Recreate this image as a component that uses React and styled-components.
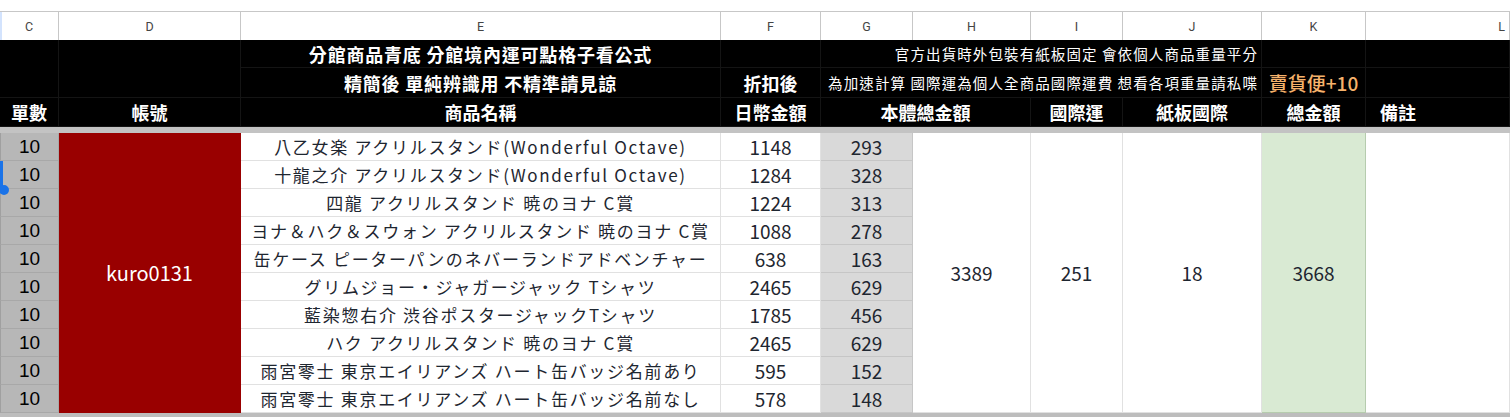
import React from 'react'
import styled, { createGlobalStyle } from 'styled-components'

const COLS = '59px 182px 480px 100px 92px 118px 92px 139px 104px 1fr'

const items = [
  { name: '八乙女楽 アクリルスタンド(Wonderful Octave)', yen: 1148, twd: 293 },
  { name: '十龍之介 アクリルスタンド(Wonderful Octave)', yen: 1284, twd: 328 },
  { name: '四龍 アクリルスタンド 暁のヨナ C賞', yen: 1224, twd: 313 },
  { name: 'ヨナ＆ハク＆スウォン アクリルスタンド 暁のヨナ C賞', yen: 1088, twd: 278 },
  { name: '缶ケース ピーターパンのネバーランドアドベンチャー', yen: 638, twd: 163 },
  { name: 'グリムジョー・ジャガージャック Tシャツ', yen: 2465, twd: 629 },
  { name: '藍染惣右介 渋谷ポスタージャックTシャツ', yen: 1785, twd: 456 },
  { name: 'ハク アクリルスタンド 暁のヨナ C賞', yen: 2465, twd: 629 },
  { name: '雨宮零士 東京エイリアンズ ハート缶バッジ名前あり', yen: 595, twd: 152 },
  { name: '雨宮零士 東京エイリアンズ ハート缶バッジ名前なし', yen: 578, twd: 148 },
]

const GlobalStyle = createGlobalStyle`
  html, body {
    margin: 0;
    padding: 0;
    background: #fff;
    overflow: hidden;
  }
  body {
    font-family: "Noto Sans CJK TC", "Noto Sans", sans-serif;
  }
`

const Sheet = styled.div`
  width: 1510px;
  height: 417px;
  padding-top: 11px;
  box-sizing: border-box;
  background: #fff;
`

const ColumnBar = styled.div`
  display: grid;
  grid-template-columns: ${COLS};
  height: 29px;
  border-top: 1px solid #c7c7c7;
  box-sizing: border-box;
`

const ColLetter = styled.div`
  display: flex;
  align-items: center;
  justify-content: ${p => (p.$end ? 'flex-end' : 'center')};
  padding-right: ${p => (p.$end ? '4px' : '0')};
  border-right: 1px solid #c7c7c7;
  font-family: Roboto, "Liberation Sans", sans-serif;
  font-size: 12.5px;
  color: #444;
  box-shadow: ${p => (p.$mark ? 'inset 2px 0 0 #d3e3fd' : 'none')};
`

const Header = styled.div`
  display: grid;
  grid-template-columns: ${COLS};
  grid-template-rows: 28px 30px 29px;
  background: #000;
`

const HeadCell = styled.div`
  grid-column: ${p => p.$col || 'auto'};
  grid-row: ${p => p.$row || 'auto'};
  display: flex;
  align-items: center;
  justify-content: ${p => p.$align || 'center'};
  padding: ${p => p.$pad || '0'};
  border-right: 1px solid #141414;
  border-bottom: 1px solid #141414;
  color: ${p => p.$color || '#fff'};
  font-size: ${p => p.$size || '18px'};
  font-weight: ${p => p.$weight || 700};
  letter-spacing: ${p => p.$track || '0'};
  white-space: nowrap;
  overflow: hidden;
  box-sizing: border-box;
`

const Freeze = styled.div`
  height: 6px;
  background: #c3c3c3;
`

const Body = styled.div`
  position: relative;
  display: grid;
  grid-template-columns: ${COLS};
  grid-template-rows: repeat(10, 28px);
`

const Cell = styled.div`
  grid-column: ${p => p.$col || 'auto'};
  grid-row: ${p => p.$row || 'auto'};
  display: flex;
  align-items: center;
  justify-content: center;
  background: ${p => p.$bg || '#fff'};
  border-right: 1px solid ${p => p.$line || '#e1e1e1'};
  border-bottom: 1px solid ${p => p.$line || '#e1e1e1'};
  color: #1e2630;
  font-size: 19px;
  white-space: nowrap;
  overflow: hidden;
  box-sizing: border-box;
`

const Qty = styled(Cell)`
  font-family: "Liberation Sans", Arial, sans-serif;
  color: #000;
  border-left: 1px solid #a0a0a0;
`

const ItemName = styled(Cell)`
  font-size: 17px;
  letter-spacing: 1.7px;
`

const Account = styled(Cell)`
  color: #fff;
  font-size: 20px;
  font-weight: 400;
`

const BottomEdge = styled.div`
  height: 4px;
  background: #bdbdbd;
`

const SelectEdge = styled.div`
  position: absolute;
  left: 0;
  top: 28px;
  width: 3px;
  height: 29px;
  background: #1a73e8;
`

const SelectDot = styled.div`
  position: absolute;
  left: -1px;
  top: 52px;
  width: 10px;
  height: 10px;
  border-radius: 50%;
  background: #1a73e8;
`

const letters = ['C', 'D', 'E', 'F', 'G', 'H', 'I', 'J', 'K', 'L']

export default function App() {
  return (
    <>
      <GlobalStyle />
      <Sheet>
        <ColumnBar>
          {letters.map((l, i) => (
            <ColLetter key={l} $mark={i === 0} $end={l === 'L'}>
              {l}
            </ColLetter>
          ))}
        </ColumnBar>

        <Header>
          <HeadCell $col="1" $row="1 / 3" />
          <HeadCell $col="2" $row="1 / 3" />
          <HeadCell $col="3" $row="1" $track="0.8px">分館商品青底 分館境內運可點格子看公式</HeadCell>
          <HeadCell $col="4" $row="1" />
          <HeadCell $col="5 / 9" $row="1" $size="14.5px" $weight={400} $track="1.1px" $align="flex-end" $pad="0 3px 0 0">
            官方出貨時外包裝有紙板固定 會依個人商品重量平分
          </HeadCell>
          <HeadCell $col="9" $row="1" />
          <HeadCell $col="10" $row="1" />

          <HeadCell $col="3" $row="2" $track="0.8px">精簡後 單純辨識用 不精準請見諒</HeadCell>
          <HeadCell $col="4" $row="2">折扣後</HeadCell>
          <HeadCell $col="5 / 9" $row="2" $size="14.5px" $weight={400} $track="1.1px" $align="flex-end" $pad="0 3px 0 0">
            為加速計算 國際運為個人全商品國際運費 想看各項重量請私喋
          </HeadCell>
          <HeadCell $col="9" $row="2" $color="#f6b26b" $size="19px" $weight={500}>賣貨便+10</HeadCell>
          <HeadCell $col="10" $row="2" />

          <HeadCell $col="1" $row="3">單數</HeadCell>
          <HeadCell $col="2" $row="3">帳號</HeadCell>
          <HeadCell $col="3" $row="3">商品名稱</HeadCell>
          <HeadCell $col="4" $row="3">日幣金額</HeadCell>
          <HeadCell $col="5 / 7" $row="3">本體總金額</HeadCell>
          <HeadCell $col="7" $row="3">國際運</HeadCell>
          <HeadCell $col="8" $row="3">紙板國際</HeadCell>
          <HeadCell $col="9" $row="3">總金額</HeadCell>
          <HeadCell $col="10" $row="3" $align="flex-start" $pad="0 0 0 14px">備註</HeadCell>
        </Header>

        <Freeze />

        <Body>
          {items.map((it, i) => (
            <React.Fragment key={i}>
              <Qty $col="1" $row={i + 1} $bg="#b7b7b7" $line="#a8a8a8">10</Qty>
              <ItemName $col="3" $row={i + 1}>{it.name}</ItemName>
              <Cell $col="4" $row={i + 1}>{it.yen}</Cell>
              <Cell $col="5" $row={i + 1} $bg="#d9d9d9" $line="#c6c6c6">{it.twd}</Cell>
            </React.Fragment>
          ))}
          <Account $col="2" $row="1 / 11" $bg="#990000" $line="#990000">kuro0131</Account>
          <Cell $col="6" $row="1 / 11">3389</Cell>
          <Cell $col="7" $row="1 / 11">251</Cell>
          <Cell $col="8" $row="1 / 11">18</Cell>
          <Cell $col="9" $row="1 / 11" $bg="#d9ead3" $line="#b6ccae">3668</Cell>
          <Cell $col="10" $row="1 / 11" />
          <SelectEdge />
          <SelectDot />
        </Body>

        <BottomEdge />
      </Sheet>
    </>
  )
}
